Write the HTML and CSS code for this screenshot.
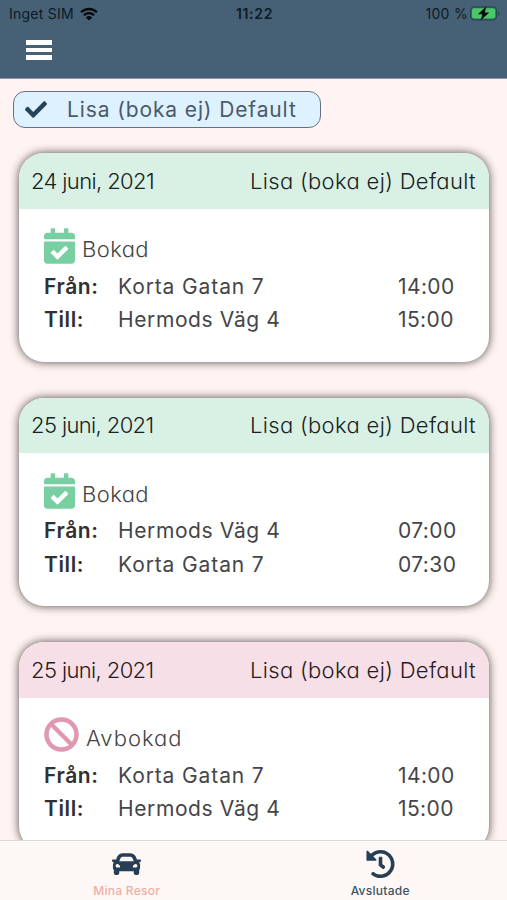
FILE: index.html
```html
<!DOCTYPE html>
<html lang="sv">
<head>
<meta charset="utf-8">
<title>Mina Resor</title>
<link rel="stylesheet" href="styles.css">
</head>
<body>
<svg class="defs" aria-hidden="true">
  <symbol id="calendar" viewBox="0 0 448 512"><path d="M436 160H12c-6.627 0-12-5.373-12-12v-36c0-26.51 21.49-48 48-48h48V12c0-6.627 5.373-12 12-12h40c6.627 0 12 5.373 12 12v52h128V12c0-6.627 5.373-12 12-12h40c6.627 0 12 5.373 12 12v52h48c26.51 0 48 21.49 48 48v36c0 6.627-5.373 12-12 12zM12 192h424c6.627 0 12 5.373 12 12v260c0 26.51-21.49 48-48 48H48c-26.51 0-48-21.49-48-48V204c0-6.627 5.373-12 12-12zm333.296 95.947l-28.169-28.398c-4.667-4.705-12.265-4.736-16.97-.068L194.12 364.665l-45.98-46.352c-4.667-4.705-12.266-4.736-16.971-.068l-28.397 28.17c-4.705 4.667-4.736 12.265-.068 16.97l82.601 83.269c4.667 4.705 12.265 4.736 16.97.068l142.953-141.805c4.705-4.667 4.736-12.265.068-16.97z"/></symbol>
</svg>
<div class="app">
  <header class="top">
    <div class="status">
      <div class="carrier"><span>Inget SIM</span>
        <svg class="wifi" viewBox="0 0 18 14"><path d="M1.1 5.2a11.3 11.3 0 0 1 15.8 0M3.9 8.2a7.3 7.3 0 0 1 10.2 0" fill="none" stroke="currentColor" stroke-width="2.3"/><path d="M9 13.6 5.9 10.4a4.5 4.5 0 0 1 6.2 0z" fill="currentColor"/></svg>
      </div>
      <div class="clock">11:22</div>
      <div class="power"><span>100 %</span>
        <svg class="battery" viewBox="0 0 30 15"><rect x=".6" y=".9" width="26" height="13" rx="3.6" fill="none" stroke="#264a51" stroke-width="1.1"/><rect x="2" y="2.3" width="23.2" height="10.2" rx="2.2" fill="#48c867"/><path d="M28 5.2c2 .7 2 3.9 0 4.6z" fill="#264a51"/><path d="M16.3.5 7.8 8.3h4.6L10.6 14.4 19.3 6.5h-4.5z" fill="#05090b"/></svg>
      </div>
    </div>
    <div class="menu"><i></i><i></i><i></i></div>
  </header>
  <main class="trips">
    <div class="chip">
      <svg class="check" viewBox="0 64 512 384"><path fill="currentColor" d="M173.898 439.404l-166.4-166.4c-9.997-9.997-9.997-26.206 0-36.204l36.203-36.204c9.997-9.998 26.207-9.998 36.204 0L192 312.69 432.095 72.596c9.997-9.997 26.207-9.997 36.204 0l36.203 36.204c9.997 9.997 9.997 26.206 0 36.204l-294.4 294.401c-9.998 9.997-26.207 9.997-36.204-.001z"/></svg>
      <span>Lisa (boka ej) Default</span>
    </div>
    <article class="card">
      <div class="card-head"><span class="date">24 juni, 2021</span><span class="name">Lisa (boka ej) Default</span></div>
      <div class="state"><svg class="calendar"><use href="#calendar"/></svg><span class="booked">Bokad</span></div>
      <div class="leg"><b class="from">Från:</b><span class="korta">Korta Gatan 7</span><time>14:00</time></div>
      <div class="leg"><b class="to">Till:</b><span class="hermods">Hermods Väg 4</span><time>15:00</time></div>
    </article>
    <article class="card">
      <div class="card-head"><span class="date">25 juni, 2021</span><span class="name">Lisa (boka ej) Default</span></div>
      <div class="state"><svg class="calendar"><use href="#calendar"/></svg><span class="booked">Bokad</span></div>
      <div class="leg"><b class="from">Från:</b><span class="hermods">Hermods Väg 4</span><time>07:00</time></div>
      <div class="leg"><b class="to">Till:</b><span class="korta">Korta Gatan 7</span><time>07:30</time></div>
    </article>
    <article class="card cancelled">
      <div class="card-head"><span class="date">25 juni, 2021</span><span class="name">Lisa (boka ej) Default</span></div>
      <div class="state"><svg class="ban" viewBox="0 0 35 35"><g fill="none" stroke="currentColor" stroke-width="4.5"><circle cx="17.5" cy="17.5" r="15"/><path d="M7 7l21 21"/></g></svg><span class="unbooked">Avbokad</span></div>
      <div class="leg"><b class="from">Från:</b><span class="korta">Korta Gatan 7</span><time>14:00</time></div>
      <div class="leg"><b class="to">Till:</b><span class="hermods">Hermods Väg 4</span><time>15:00</time></div>
    </article>
  </main>
  <nav class="tabs">
    <div class="tab active"><svg viewBox="0 0 512 512"><path d="M499.99 176h-59.87l-16.64-41.6C406.38 91.63 365.57 64 319.5 64h-127c-46.06 0-86.88 27.63-103.99 70.4L71.87 176H12.01C4.2 176-1.53 183.34.37 190.91l6 24C7.7 220.25 12.5 224 18.01 224h20.07C24.65 235.73 16 252.78 16 272v48c0 16.12 6.16 30.67 16 41.93V416c0 17.67 14.33 32 32 32h32c17.67 0 32-14.33 32-32v-32h256v32c0 17.67 14.33 32 32 32h32c17.67 0 32-14.33 32-32v-54.07c9.84-11.25 16-25.8 16-41.93v-48c0-19.22-8.65-36.27-22.07-48H494c5.51 0 10.31-3.75 11.64-9.09l6-24c1.89-7.57-3.84-14.91-11.65-14.91zm-352.06-17.83c7.29-18.22 24.94-30.17 44.57-30.17h127c19.63 0 37.28 11.95 44.57 30.17L384 208H128l19.93-49.83zM96 319.8c-19.2 0-32-12.76-32-31.9S76.8 256 96 256s48 28.71 48 47.85-28.8 15.95-48 15.95zm320 0c-19.2 0-48 3.19-48-15.95S396.8 256 416 256s32 12.76 32 31.9-12.8 31.9-32 31.9z"/></svg><span>Mina Resor</span></div>
    <div class="tab"><svg viewBox="0 0 512 512"><path d="M504 255.531c.253 136.64-111.18 248.372-247.82 248.468-59.015.042-113.223-20.53-155.822-54.911-11.077-8.94-11.905-25.541-1.839-35.607l11.267-11.267c8.609-8.609 22.353-9.551 31.891-1.984C173.062 425.135 212.781 440 256 440c101.705 0 184-82.311 184-184 0-101.705-82.311-184-184-184-48.814 0-93.149 18.969-126.068 49.932l50.754 50.754c10.08 10.08 2.941 27.314-11.313 27.314H24c-8.837 0-16-7.163-16-16V38.627c0-14.254 17.234-21.393 27.314-11.314l49.372 49.372C129.209 34.136 189.552 8 256 8c136.81 0 247.747 110.78 248 247.531zm-180.912 78.784l9.823-12.63c8.138-10.463 6.253-25.542-4.21-33.679L288 256.349V152c0-13.255-10.745-24-24-24h-16c-13.255 0-24 10.745-24 24v135.651l65.409 50.874c10.463 8.137 25.541 6.253 33.679-4.21z"/></svg><span>Avslutade</span></div>
  </nav>
</div>
</body>
</html>
```
FILE: styles.css
```css
* { box-sizing: border-box; }
body { margin: 0; font-family: Inter, "Liberation Sans", sans-serif; }
svg { display: block; flex: none; }
.defs { width: 0; height: 0; position: absolute; }
.app { width: 507px; height: 900px; display: flex; flex-direction: column; overflow: hidden; background: #fff4f2; }
.top { height: 79px; flex: none; background: #466075; border-bottom: 1px solid #8b98a3; }
.status { height: 27px; padding: 0 7px 0 9px; display: grid; grid-template-columns: 1fr auto 1fr; align-items: center; font-size: 14px; line-height: 27px; color: #0c1b26; }
.carrier, .power { display: flex; align-items: center; }
.carrier { gap: 6px; letter-spacing: .25px; }
.power { justify-content: flex-end; gap: 2px; letter-spacing: .3px; }
.wifi { width: 18px; height: 14px; color: #05090d; }
.battery { width: 30px; height: 15px; }
.clock { font-weight: 600; letter-spacing: .7px; }
.menu { width: 26px; margin: 13px 0 0 26px; display: grid; gap: 3px; }
.menu i { height: 4.5px; background: #fff; }
.trips { flex: 1; min-height: 0; overflow: hidden; padding: 12px 18px 0 19px; }
.chip { width: 308px; height: 37px; margin: 0 0 25px -6px; padding-left: 11px; display: flex; align-items: center; gap: 20px; border: 1.4px solid #65717c; border-radius: 12px; background: #def1ff; color: #4b5a69; font-size: 21px; letter-spacing: .88px; white-space: nowrap; }
.check { width: 22px; height: 17px; color: #27435a; }
.card { height: 208.5px; margin-bottom: 36px; border-radius: 25px; background: #fff; box-shadow: 0 0 10px #4e4848; overflow: hidden; color: #454548; }
.card-head { height: 55.5px; padding: 0 13px 0 12px; display: flex; align-items: center; justify-content: space-between; background: #d9f1e4; color: #18221e; font-size: 22px; font-weight: 300; font-feature-settings: "cv11"; white-space: nowrap; }
.cancelled .card-head { background: #f6dfe6; color: #281a20; }
.date { letter-spacing: -.62px; }
.name { letter-spacing: .34px; }
.state { height: 61px; padding: 19.5px 25px 0; display: flex; gap: 7px; font-size: 22px; font-weight: 300; line-height: 43px; font-feature-settings: "cv11"; }
.booked { letter-spacing: .4px; }
.unbooked { letter-spacing: 1px; }
.calendar { width: 31px; height: 36px; fill: #78cfa1; }
.ban { width: 35px; height: 35px; color: #df98ae; }
.leg { height: 33.5px; padding: 0 25px; display: grid; grid-template-columns: 74px 280px 1fr; align-items: center; font-size: 21px; letter-spacing: .6px; white-space: nowrap; }
.leg b { font-weight: 600; color: #303033; }
.korta { letter-spacing: .88px; }
.leg time { letter-spacing: .4px; }
.tabs { height: 60px; flex: none; display: flex; border-top: 1px solid #ded8d5; background: #fdf8f5; }
.tab { flex: 1; display: flex; flex-direction: column; align-items: center; padding-top: 8px; color: #405261; font-size: 12px; line-height: 16px; font-weight: 500; letter-spacing: .28px; }
.tab svg { width: 29px; height: 30px; margin-bottom: 4px; fill: #263f56; }
.active span { color: #efaea7; }
```
